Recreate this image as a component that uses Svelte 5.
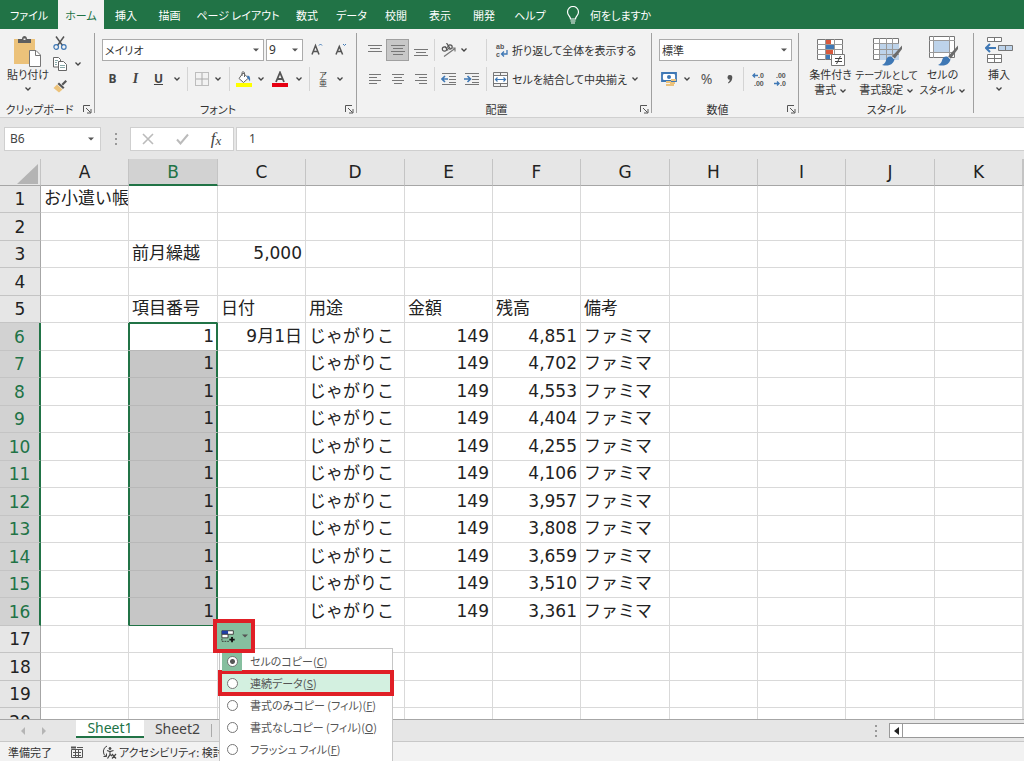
<script>
  const tabs = ['ファイル', 'ホーム', '挿入', '描画', 'ページ レイアウト', '数式', 'データ', '校閲', '表示', '開発', 'ヘルプ'];
  const cols = ['A', 'B', 'C', 'D', 'E', 'F', 'G', 'H', 'I', 'J', 'K', ''];
  const widths = [41, 88, 89, 88, 99, 88, 88, 89, 88, 88, 89, 88];
  const balances = ['4,851', '4,702', '4,553', '4,404', '4,255', '4,106', '3,957', '3,808', '3,659', '3,510', '3,361'];

  const cells = {
    A1: 'お小遣い帳',
    B3: '前月繰越',
    C3: '5,000',
    B5: '項目番号',
    C5: '日付',
    D5: '用途',
    E5: '金額',
    F5: '残高',
    G5: '備考',
    C6: '9月1日'
  };
  balances.forEach((b, i) => {
    const r = i + 6;
    cells['B' + r] = '1';
    cells['D' + r] = 'じゃがりこ';
    cells['E' + r] = '149';
    cells['F' + r] = b;
    cells['G' + r] = 'ファミマ';
  });

  const rows = Array.from({ length: 20 }, (_, i) => i + 1);
  const inSel = (r) => r >= 6 && r <= 16;
  const isNum = (v) => v !== undefined && /^\d/.test(v);

  const fills = [
    ['セルのコピー', 'C'],
    ['連続データ', 'S'],
    ['書式のみコピー (フィル)', 'F'],
    ['書式なしコピー (フィル)', 'O'],
    ['フラッシュ フィル', 'F']
  ];
  let fill = $state(0);
</script>

{#snippet chev()}
  <svg class="chev" width="8" height="6" viewBox="0 0 8 6"><path d="M1.500 1.500 4 4l2.500-2.500" fill="none" stroke="#444" stroke-width="1.300" /></svg>
{/snippet}

{#snippet caret()}
  <svg class="caret" width="6" height="4" viewBox="0 0 6 4"><path d="M0 .5h6L3 3.500z" fill="#555" /></svg>
{/snippet}

{#snippet footer(name, launcher)}
  <div class="foot">
    <span>{name}</span>
    {#if launcher}
      <button class="launch" aria-label={name}>
        <svg width="9" height="9" viewBox="0 0 9 9" fill="none" stroke="#555"><path d="M.5 7V.5H7M3 3l4.500 4.500M8 4v4H4" /></svg>
      </button>
    {/if}
  </div>
{/snippet}

{#snippet lines(list)}
  <svg width="14" height="14" viewBox="0 0 14 14" stroke="#777">
    {#each list as [x1, x2, y]}<path d="M{x1} {y}.5H{x2}" />{/each}
  </svg>
{/snippet}

{#snippet brush()}
  <path d="M30 9.500 20 20.500l2.500 2.500L30 13z" fill="#6b6b6b" />
  <path d="M19.500 20.500c-3-.6-5 1-5.500 4-.5 2-2 3.500-4 4.500 5 1.500 11 .5 12.500-5.500z" fill="#3f78b5" />
  <path d="m20 20.500 2.500 2.500" stroke="#fff" />
{/snippet}

<div class="app">
  <nav class="tabs">
    {#each tabs as t, i}
      <button class="tab" class:active={i === 1}>{t}</button>
    {/each}
    <button class="tell">
      <svg width="14" height="18" viewBox="0 0 14 18" fill="none" stroke="#fff" stroke-width="1.200"><path d="M4.500 13c0-3-3-3.500-3-7a5.500 5.500 0 0 1 11 0c0 3.500-3 4-3 7zM4.500 15h5M5 17h4" /></svg>
      何をしますか
    </button>
  </nav>

  <div class="ribbon">
    <section class="group clip">
      <div class="big-row">
        <button class="big paste">
          <svg width="28" height="31" viewBox="0 0 28 31">
            <path d="M0 3h21v25H0z" fill="#ecc27a" />
            <path d="M4 3h4c0-4 5-4 5 0h4v4H4z" fill="#5e5e5e" /><path d="M9.500 2.500h2v1.500h-2z" fill="#f2f2f2" />
            <path d="M15.500 14.500h6.500l4.500 4.500v11.500h-11z" fill="#fff" stroke="#777" /><path d="M21.500 14.500V19.500h5" fill="none" stroke="#777" />
          </svg>
          <span>貼り付け</span>
          {@render chev()}
        </button>
        <div class="small-col">
          <button aria-label="切り取り">
            <svg width="14" height="14" viewBox="0 0 14 14" fill="none"><path d="M3 0.500 9.500 9.500M11 .5 4.500 9.500" stroke="#555" stroke-width="1.500" /><circle cx="3.200" cy="11" r="2.300" stroke="#3f78b5" stroke-width="1.200" /><circle cx="10.800" cy="11" r="2.300" stroke="#3f78b5" stroke-width="1.200" /></svg>
          </button>
          <button aria-label="コピー">
            <svg width="14" height="14" viewBox="0 0 14 14" fill="#fff" stroke="#666"><path d="M.5.5h5l2 2v7.500h-7z" /><path d="M5.500 4.500h5l3 3v6h-8z" /><path d="M2 3.500h3M2 5.500h2M2 7.500h2M7 8.500h5M7 10.500h5" stroke="#8aa" /></svg>
          </button>
          <button class="cv" aria-label="コピーのオプション">{@render chev()}</button>
          <button class="painter" aria-label="書式のコピー">
            <svg width="14" height="13" viewBox="0 0 14 13"><path d="m12.500 0 1.500 1.500-4 4L8.500 4z" fill="#555" /><path d="m6 2.500 5.500 5-1.500 1.500-5.500-5z" fill="#555" /><path d="m4 4.500 5.500 5L6 12.500.5 8z" fill="#ecc27a" /></svg>
          </button>
        </div>
      </div>
      {@render footer('クリップボード', true)}
    </section>

    <section class="group font">
      <div class="row1 fontrow">
        <label class="pick name"><select aria-label="フォント名"><option>メイリオ</option></select>{@render caret()}</label>
        <label class="pick size"><select aria-label="フォント サイズ"><option>9</option></select>{@render caret()}</label>
        <button class="grow" aria-label="フォント サイズの拡大"><svg width="13" height="14" viewBox="0 0 13 14" fill="none" stroke="#555"><path d="m1 12.500 3.500-9 3.500 9M2.200 9.500h4.600" stroke-width="1.500" /><path d="m8 3.500 1.500-1.500L11 3.500" stroke="#3f78b5" /></svg></button>
        <button class="grow" aria-label="フォント サイズの縮小"><svg width="13" height="14" viewBox="0 0 13 14" fill="none" stroke="#555"><path d="m1 12.500 3.300-8 3.300 8M2.200 9.500h4.200" stroke-width="1.500" /><path d="m8 2 1.500 1.500L11 2" stroke="#3f78b5" /></svg></button>
      </div>
      <div class="row2 styles">
        <button class="b">B</button>
        <button class="i">I</button>
        <button class="u">U</button>
        <button aria-label="下線のオプション">{@render chev()}</button>
        <i class="sep"></i>
        <button aria-label="罫線"><svg width="14" height="14" viewBox="0 0 14 14" fill="none" stroke="#888"><path d="M.5.5h13v13H.5z" stroke-dasharray="1 1" /><path d="M7 1v12M1 7h12" stroke="#aaa" /></svg></button>
        <button aria-label="罫線のオプション">{@render chev()}</button>
        <i class="sep"></i>
        <button aria-label="塗りつぶしの色"><svg width="16" height="16" viewBox="0 0 16 16"><path d="m7 2 5.500 5L7.500 11.500 3 7.500z" fill="#fff" stroke="#666" /><path d="M6 5V1.500C6 .5 8.500.5 8.500 2v4" fill="none" stroke="#666" /><path d="M11.500 4.500c2.500 0 3 3 2.500 6-1-1-1.500-3-3-4z" fill="#3f78b5" /><path d="M0 12h16v4H0z" fill="#ff0" /></svg></button>
        <button aria-label="色のオプション">{@render chev()}</button>
        <button aria-label="フォントの色"><svg width="16" height="16" viewBox="0 0 16 16"><path d="M4 11 8 1.500 12 11M5.500 8h5" fill="none" stroke="#555" stroke-width="1.800" /><path d="M0 12h16v4H0z" fill="#e60012" /></svg></button>
        <button aria-label="文字色のオプション">{@render chev()}</button>
        <i class="sep"></i>
        <button class="ruby" aria-label="ふりがな"><span>ア</span><span>亜</span></button>
        <button aria-label="ふりがなのオプション">{@render chev()}</button>
      </div>
      {@render footer('フォント', true)}
    </section>

    <section class="group align">
      <div class="row1 al">
        <button aria-label="上揃え">{@render lines([[0, 14, 2], [2, 12, 5], [0, 14, 8]])}</button>
        <button class="on" aria-label="上下中央揃え">{@render lines([[0, 14, 2], [2, 12, 5], [0, 14, 8], [2, 12, 11]])}</button>
        <button aria-label="下揃え">{@render lines([[0, 14, 6], [2, 12, 9], [0, 14, 12]])}</button>
        <i class="sep"></i>
        <button aria-label="方向"><svg width="15" height="14" viewBox="0 0 15 14" fill="none" stroke="#555" stroke-width="1.200"><circle cx="3.500" cy="6" r="2.200" /><path d="m4 3.500 3 4M5.500 0l4 6" /><circle cx="9" cy="4" r="2.200" /><path d="M3 13.500 14 5.500M10.500 5H14v3.500" stroke="#777" /></svg></button>
        <button class="left" aria-label="方向のオプション">{@render chev()}</button>
        <i class="sep"></i>
        <button class="wide wrap"><svg width="13" height="17" viewBox="0 0 13 17"><text x="1" y="7" class="tiny">ab</text><text x="1" y="15" class="tiny">c</text><path d="M12 8v4H6.500M9 9.500 6.500 12 9 14.500" fill="none" stroke="#3f78b5" stroke-width="1.300" /></svg>折り返して全体を表示する</button>
      </div>
      <div class="row2 al">
        <button aria-label="左揃え">{@render lines([[1, 13, 2], [1, 9, 5], [1, 13, 8], [1, 9, 11]])}</button>
        <button aria-label="中央揃え">{@render lines([[1, 13, 2], [3, 11, 5], [1, 13, 8], [3, 11, 11]])}</button>
        <button aria-label="右揃え">{@render lines([[1, 13, 2], [5, 13, 5], [1, 13, 8], [5, 13, 11]])}</button>
        <i class="sep"></i>
        <button aria-label="インデントを減らす"><svg width="15" height="14" viewBox="0 0 15 14" fill="none" stroke="#777"><path d="M1 1.500h14M8 4.500h7M8 7.500h7M8 10.500h7M1 12.500h14" /><path d="M7 7H1M4 4 1 7l3 3" stroke="#3f78b5" stroke-width="1.600" /></svg></button>
        <button aria-label="インデントを増やす"><svg width="15" height="14" viewBox="0 0 15 14" fill="none" stroke="#777"><path d="M1 1.500h14M8 4.500h7M8 7.500h7M8 10.500h7M1 12.500h14" /><path d="M0 7h6M3.500 4l3 3-3 3" stroke="#3f78b5" stroke-width="1.600" /></svg></button>
        <i class="sep"></i>
        <button class="wide"><svg width="15" height="15" viewBox="0 0 15 15" fill="none" stroke="#777"><path d="M.5.5h14v14H.5zM.5 3.500h14M.5 11.500h14M7.500.5v3M7.500 11.500v3" /><path d="M1 4h13v7H1z" fill="#fff" stroke="none" /><path d="M2.500 7.500h10M4.500 5.500l-2 2 2 2M10.500 5.500l2 2-2 2" stroke="#3f78b5" stroke-width="1.200" /></svg>セルを結合して中央揃え</button>
        <button class="end" aria-label="結合のオプション">{@render chev()}</button>
      </div>
      {@render footer('配置', true)}
    </section>

    <section class="group number">
      <div class="row1"><label class="pick fmt"><select aria-label="表示形式"><option>標準</option></select>{@render caret()}</label></div>
      <div class="row2 nums">
        <button aria-label="通貨表示形式"><svg width="17" height="15" viewBox="0 0 17 15"><path d="M1 1h14v8H1z" fill="#fff" stroke="#3f78b5" stroke-width="1.800" /><circle cx="8" cy="5" r="2" fill="#3f78b5" /><path d="M1 3.500 3 1M15 3.500 13 1M1 6.500 3 9" stroke="#3f78b5" /><path d="M10 7h5v2h-5zM9 10h5v2H9zM5 9h5v2H5zM5 12h8v2H5z" fill="#ecc27a" /></svg></button>
        <button aria-label="通貨のオプション">{@render chev()}</button>
        <button class="pct">%</button>
        <button aria-label="桁区切り"><svg width="6" height="9" viewBox="0 0 6 9"><path d="M3 0a2.300 2.300 0 0 1 2.300 2.500C5.300 5 4 7 1.500 8.500L1 7.500C2 7 2.700 6 2.800 4.800A2.400 2.400 0 0 1 3 0z" fill="#555" /></svg></button>
        <i class="sep"></i>
        <button aria-label="小数点以下の表示桁数を増やす"><svg width="14" height="17" viewBox="0 0 14 17"><text x="6" y="7" class="tiny">.0</text><text x="2" y="15" class="tiny">.00</text><path d="M6 4.500H1M3 2.500l-2 2 2 2" fill="none" stroke="#3f78b5" stroke-width="1.400" /></svg></button>
        <button aria-label="小数点以下の表示桁数を減らす"><svg width="14" height="17" viewBox="0 0 14 17"><text x="2" y="7" class="tiny">.00</text><text x="6" y="15" class="tiny">.0</text><path d="M0 12.500h5M3 10.500l2 2-2 2" fill="none" stroke="#3f78b5" stroke-width="1.400" /></svg></button>
      </div>
      {@render footer('数値', true)}
    </section>

    <section class="group look">
      <div class="big-row look-row">
        <button class="big">
          <svg width="30" height="31" viewBox="0 0 30 31">
            <path d="M1.500 3.500h25v20h-25z" fill="#fff" stroke="#777" /><path d="M9.500 3v21M18.500 3v21M1 8.500h26M1 13.500h26M1 18.500h26" stroke="#999" />
            <path d="M10 4h5v4h-5zM10 14h7v4h-7z" fill="#d9583b" /><path d="M10 9h8v4h-8zM10 19h4v4h-4z" fill="#3f78b5" />
            <path d="M15.500 18.500h13v11h-13z" fill="#fff" stroke="#777" /><path d="M19 22.500h7M19 25.500h7M24.500 20l-4 8" stroke="#444" />
          </svg>
          <span>条件付き</span><span>書式 {@render chev()}</span>
        </button>
        <button class="big">
          <svg width="30" height="31" viewBox="0 0 30 31">
            <path d="M1.500 2.500h25v21h-25z" fill="#fff" stroke="#777" /><path d="M8 8h19v16H8z" fill="#bdd3ea" /><path d="M7.500 2v22M14.500 2v22M20.500 2v22M1 7.500h26M1 13.500h26M1 18.500h26" stroke="#999" />
            {@render brush()}
          </svg>
          <span class="long">テーブルとして</span><span>書式設定 {@render chev()}</span>
        </button>
        <button class="big">
          <svg width="30" height="31" viewBox="0 0 30 31">
            <path d="M1.500.5h25v21h-25z" fill="#fff" stroke="#777" /><path d="M5.500 0v22M21.500 0v22M1 4.500h26M1 16.500h26" stroke="#999" /><path d="M6 5h15v11H6z" fill="#bdd3ea" />
            {@render brush()}
          </svg>
          <span>セルの</span><span class="long">スタイル {@render chev()}</span>
        </button>
      </div>
      {@render footer('スタイル', false)}
    </section>

    <section class="group last">
      <div class="big-row">
        <button class="big">
          <svg width="28" height="31" viewBox="0 0 28 31" fill="#fff" stroke="#777">
            <path d="M2.500 1.500h14v4h-14zM9.500 1.500v4M2.500 18.500h14v8h-14zM9.500 18.500v8M2.500 22.500h14" />
            <path d="M13.500 9.500h14v5h-14zM20.500 9.500v5" fill="#bdd3ea" /><path d="M11 12H1M5 8l-4 4 4 4" fill="none" stroke="#3f78b5" stroke-width="2" />
          </svg>
          <span>挿入</span>
          {@render chev()}
        </button>
      </div>
    </section>
  </div>

  <div class="formula">
    <div class="namebox"><input aria-label="名前ボックス" value="B6" />{@render caret()}</div>
    <svg class="dots" width="4" height="12" viewBox="0 0 4 12" fill="#999"><path d="M1 0h2v2H1zM1 5h2v2H1zM1 10h2v2H1z" /></svg>
    <div class="fxbox">
      <button aria-label="キャンセル"><svg width="12" height="12" viewBox="0 0 12 12"><path d="m1 1 10 10M11 1 1 11" stroke="#bbb" stroke-width="1.600" /></svg></button>
      <button aria-label="入力"><svg width="13" height="12" viewBox="0 0 13 12"><path d="m1 6.500 3.500 4L12 1.500" fill="none" stroke="#bbb" stroke-width="2" /></svg></button>
      <button class="fx"><span>f</span><small>x</small></button>
    </div>
    <input class="entry" aria-label="数式バー" value="1" />
  </div>

  <main class="sheet">
    <div class="clipper">
      <table>
        <colgroup>
          {#each widths as w}<col style="width: {w}px" />{/each}
          <col />
        </colgroup>
        <thead>
          <tr>
            <th class="corner"><svg width="21" height="20" viewBox="0 0 21 20"><path d="M21 0v20H0z" fill="#b4b4b4" /></svg></th>
            {#each cols as c}<th class:hot={c === 'B'}>{c}</th>{/each}
          </tr>
        </thead>
        <tbody>
          {#each rows as r}
            <tr>
              <th class:hot={inSel(r)}>{r}</th>
              {#each cols as c}
                {@const v = cells[c + r]}
                <td
                  class:num={isNum(v)}
                  class:sel={c === 'B' && inSel(r)}
                  class:first={c === 'B' && r === 6}
                  class:final={c === 'B' && r === 16}
                  class:above={c === 'B' && r === 5}
                  class:before={c === 'A' && inSel(r)}>{v ?? ''}</td>
              {/each}
            </tr>
          {/each}
        </tbody>
      </table>
    </div>

    <div class="autofill">
      <button class="tag" aria-label="オートフィル オプション">
        <svg width="15" height="15" viewBox="0 0 17 15"><path d="M1 1h13v4H1z" fill="#fff" stroke="#333" /><path d="M1 1h7v4H1z" fill="#1f3fa8" /><path d="M1 5h7v4H1z" fill="#fff" stroke="#333" /><path d="M1 10v3h8" fill="none" stroke="#333" stroke-dasharray="2 1" /><path d="M12.500 8v6M9.500 11h6" stroke="#111" stroke-width="2" /></svg>
        {@render caret()}
      </button>
      <div class="menu">
        {#each fills as [name, key], i}
          <label class:mark={i === 1}>
            <span class="dot" class:picked={fill === i}><input type="radio" name="fill" value={i} bind:group={fill} /></span>
            <span>{name}(<u>{key}</u>)</span>
          </label>
        {/each}
      </div>
    </div>
  </main>

  <div class="sheets">
    <div class="arrows">
      <svg width="30" height="8" viewBox="0 0 30 8" fill="#b5b5b5"><path d="M5 0v8L1 4zM22 0v8l4-4z" /></svg>
    </div>
    <button class="st current">Sheet1</button>
    <button class="st">Sheet2</button>
    <i class="bar"></i>
    <div class="hscroll">
      <svg width="4" height="12" viewBox="0 0 4 12" fill="#999"><path d="M1 0h2v2H1zM1 5h2v2H1zM1 10h2v2H1z" /></svg>
      <div class="track"><button aria-label="左へスクロール"><svg width="5" height="8" viewBox="0 0 5 8"><path d="M5 0v8L0 4z" fill="#222" /></svg></button></div>
    </div>
  </div>

  <footer class="status">
    <span>準備完了</span>
    <svg width="12" height="12" viewBox="0 0 12 12" fill="none" stroke="#555"><path d="M.5 3.500h11v8H.5zM2 6.500h8M2 9.500h8M4.500 4v7M7.500 4v7" /><path d="M0 1.500h5" stroke-width="2" /><path d="M6 1.500h6" /></svg>
    <span class="acc">
      <svg width="15" height="14" viewBox="0 0 15 14" fill="none" stroke="#444"><path d="M5 1a6 6 0 0 0-1 10.500M1.500 11.500H4.500V8.500" /><circle cx="8" cy="3.500" r="1" fill="#444" /><path d="m5 5.500 3 1 3.500-1M8 6.500v3l-2.500 4M8 9.500l2 1.500M10 9l4 4.500M14 9l-4 4.500" stroke-width="1.200" /></svg>
      アクセシビリティ: 検討が
    </span>
  </footer>
</div>

<style>
  :global(body) {
    margin: 0;
  }
  .app {
    height: 100vh;
    display: flex;
    flex-direction: column;
    overflow: hidden;
    background: #e6e6e6;
    color: #333;
    font-family: "Noto Sans CJK JP", "Noto Sans", sans-serif;
    font-size: 11px;
    line-height: 16px;
    font-feature-settings: "palt";
  }
  button,
  input,
  select {
    font: inherit;
    font-feature-settings: inherit;
    color: inherit;
    background: none;
    border: 0;
    padding: 0;
    margin: 0;
    border-radius: 0;
  }
  button {
    display: flex;
    align-items: center;
    justify-content: center;
    white-space: nowrap;
  }
  svg {
    flex: none;
  }

  .tabs {
    height: 29px;
    flex: none;
    display: grid;
    grid-template-columns: 58px 46px 44px 43px 94px 44px 45px 44px 44px 44px 48px auto;
    justify-content: start;
    background: #217346;
    color: #fff;
  }
  .active {
    background: #f2f2f2;
    color: #217346;
  }
  .tell {
    gap: 10px;
    padding-left: 12px;
  }

  .ribbon {
    height: 88px;
    flex: none;
    display: flex;
    background: #f2f2f2;
    border-bottom: 1px solid #d0d0d0;
  }
  .group {
    flex: none;
    box-sizing: border-box;
    display: flex;
    flex-direction: column;
    background: linear-gradient(#a0a0a0, #a0a0a0) right 4px / 1px 80px no-repeat;
  }
  .clip {
    width: 95px;
  }
  .font {
    width: 262px;
  }
  .align {
    width: 295px;
  }
  .number {
    width: 147px;
  }
  .look {
    width: 175px;
  }
  .last {
    flex: 1 1 50px;
    min-width: 50px;
    background: none;
  }
  .foot {
    margin-top: auto;
    height: 16px;
    display: flex;
    align-items: center;
  }
  .foot span {
    flex: 1;
    text-align: center;
  }
  .launch {
    width: 16px;
    height: 16px;
  }
  .row1 {
    margin-top: 10px;
    height: 22px;
  }
  .row2 {
    margin-top: 6px;
    height: 24px;
  }
  .sep {
    width: 1px;
    align-self: stretch;
    justify-self: center;
    background: #d4d4d4;
  }
  .big-row {
    margin-top: 7px;
    display: flex;
  }
  .big {
    flex-direction: column;
    justify-content: flex-start;
    line-height: 15px;
  }
  .paste {
    width: 56px;
    margin-right: -4px;
  }
  .paste .chev,
  .last .chev {
    margin-top: 4px;
  }
  .last .big-row {
    justify-content: center;
  }
  .small-col {
    display: grid;
    grid-template-columns: 16px 20px;
    grid-template-rows: 14px 28px 16px;
  }
  .small-col button:nth-child(2) {
    grid-area: 2 / 1;
  }
  .small-col .cv {
    grid-area: 2 / 2;
  }
  .small-col .painter {
    grid-area: 3 / 1;
  }
  .look-row {
    display: grid;
    grid-template-columns: 52px 60px 52px;
    justify-content: center;
  }
  .long {
    font-size: 10px;
  }

  .fontrow {
    display: flex;
    padding-left: 7px;
    gap: 2px;
  }
  .pick {
    position: relative;
    display: flex;
    align-items: center;
    box-sizing: border-box;
    height: 22px;
    border: 1px solid #ababab;
    background: #fff;
  }
  .pick select {
    appearance: none;
    width: 100%;
    height: 20px;
    padding-left: 2px;
    outline: none;
  }
  .caret {
    flex: none;
  }
  .pick .caret {
    position: absolute;
    right: 4px;
    pointer-events: none;
  }
  .name {
    width: 162px;
  }
  .size {
    width: 37px;
    font-family: "Noto Sans", sans-serif;
    font-size: 12px;
  }
  .fmt {
    width: 133px;
    margin-left: 7px;
  }
  .grow {
    width: 20px;
    margin-left: 2px;
    align-items: flex-start;
    padding-top: 3px;
  }
  .styles {
    display: grid;
    padding-left: 6px;
    grid-template-columns: 23px 23px 23px 13px 9px 19px 14px 8px 21px 13px 26px 12px 9px 18px 16px;
  }
  .b,
  .i,
  .u {
    font-family: "Noto Sans", sans-serif;
    font-weight: 700;
    font-size: 12px;
    color: #444;
  }
  .i {
    font-family: "Liberation Serif", serif;
    font-style: italic;
    font-size: 14px;
  }
  .u {
    text-decoration: underline;
  }
  .ruby {
    flex-direction: column;
    font-size: 8px;
    line-height: 8px;
  }
  .al {
    display: grid;
    padding-left: 6px;
    grid-template-columns: 23px 23px 23px 5px 23px 23px 6px 139px 14px;
  }
  .on {
    background: #c8c8c8;
    box-shadow: inset 0 0 0 1px #a0a0a0;
  }
  .left {
    justify-content: flex-start;
  }
  .wide {
    justify-content: flex-start;
    gap: 4px;
    padding-left: 4px;
  }
  .wrap {
    padding-left: 6px;
  }
  .tiny {
    font: 700 7px "Liberation Sans", sans-serif;
    fill: #555;
  }
  .nums {
    display: grid;
    padding-left: 7px;
    grid-template-columns: 21px 13px 27px 19px 8px 23px 22px;
  }
  .pct {
    font-family: "Noto Sans", sans-serif;
    font-size: 14px;
    color: #555;
  }

  .formula {
    flex: none;
    height: 24px;
    padding: 9px 0 7px 4px;
    display: flex;
    align-items: stretch;
  }
  .namebox,
  .fxbox,
  .entry {
    box-sizing: border-box;
    border: 1px solid #cfcfcf;
    background: #fff;
    font-family: "Noto Sans", sans-serif;
    font-size: 12px;
    color: #444;
  }
  .namebox {
    width: 97px;
    display: flex;
    align-items: center;
    padding: 0 6px 0 5px;
  }
  .namebox input {
    flex: 1;
    min-width: 0;
  }
  .dots {
    margin: 0 12px 0 13px;
    align-self: center;
  }
  .fxbox {
    width: 104px;
    display: grid;
    grid-template-columns: 34px 34px 34px;
  }
  .fx {
    font-family: "Liberation Serif", serif;
    font-style: italic;
    font-size: 17px;
    color: #444;
  }
  .fx small {
    font-size: 13px;
    padding-top: 4px;
  }
  .entry {
    flex: 1;
    min-width: 0;
    margin-left: 2px;
    padding-left: 12px;
    border-right: 0;
  }

  .sheet {
    flex: 1;
    min-height: 0;
    position: relative;
    z-index: 1;
    padding-top: 1px;
    display: flex;
  }
  .clipper {
    flex: 1;
    min-width: 0;
    overflow: hidden;
    background: #fff;
  }
  table {
    width: 100%;
    table-layout: fixed;
    border-collapse: separate;
    border-spacing: 0;
    font-family: "DejaVu Sans", "Noto Sans CJK JP", sans-serif;
    font-feature-settings: normal;
    font-size: 17px;
    line-height: 24px;
    color: #222;
  }
  th,
  td {
    box-sizing: border-box;
    padding: 0 3px 2px 3px;
    font-weight: 400;
    white-space: nowrap;
    border-right: 1px solid #d9d9d9;
    border-bottom: 1px solid #d9d9d9;
    text-align: left;
    height: 27px;
    overflow: hidden;
  }
  tbody tr:nth-child(even) > * {
    height: 28px;
  }
  th {
    background: #e6e6e6;
    text-align: center;
    padding: 0;
    border-color: #c4c4c4;
  }
  thead th {
    border-bottom-color: #a6a6a6;
  }
  tbody th {
    border-right-color: #a6a6a6;
  }
  .corner {
    text-align: right;
    line-height: 0;
    padding: 4px 2px 0 0;
  }
  .corner svg {
    display: inline-block;
  }
  th.hot {
    background: #d2d2d2;
    color: #217346;
  }
  thead th.hot {
    border-bottom: 2px solid #217346;
  }
  tbody th.hot {
    border-right: 2px solid #217346;
  }
  td.num {
    text-align: right;
  }
  td.sel {
    background: #c6c6c6;
    border-right-color: #217346;
    box-shadow: inset 1px 0 #217346, inset -1px 0 #217346;
    border-bottom-color: #b8b8b8;
  }
  td.first {
    background: #fff;
    box-shadow: inset 1px 0 #217346, inset -1px 0 #217346, inset 0 1px #217346;
  }
  td.above,
  td.final {
    border-bottom-color: #217346;
  }
  td.before {
    border-right-color: #217346;
  }

  .autofill {
    position: absolute;
    z-index: 0;
    left: 213px;
    top: 461px;
  }
  .tag {
    width: 42px;
    height: 34px;
    box-sizing: border-box;
    border: 4px solid #e01f26;
    background: #86bf9f;
    gap: 6px;
  }
  .menu {
    position: absolute;
    left: 6px;
    top: 29px;
    width: 172px;
    z-index: -1;
    background: #fff;
    border: 1px solid #c6c6c6;
    padding: 1px 0 3px;
    color: #555;
  }
  .menu label {
    display: flex;
    align-items: center;
    height: 22px;
    padding-left: 2px;
    gap: 8px;
    white-space: nowrap;
  }
  .menu .mark {
    background: #d3f0e0;
    box-shadow: 0 0 0 2px #e01f26, inset 0 0 0 2px #e01f26;
  }
  .dot {
    width: 20px;
    height: 20px;
    display: flex;
    align-items: center;
    justify-content: center;
  }
  .picked {
    background: #86bf9f;
  }
  .dot input {
    appearance: none;
    box-sizing: border-box;
    width: 11px;
    height: 11px;
    border: 1px solid #777;
    border-radius: 50%;
    background: #fff;
  }
  .dot input:checked {
    background: radial-gradient(#555 0 2px, #fff 3px);
  }

  .sheets {
    flex: none;
    box-sizing: border-box;
    height: 22px;
    display: flex;
    border-top: 1px solid #a6a6a6;
    font-family: "Noto Sans", sans-serif;
    font-size: 14px;
    color: #444;
  }
  .arrows {
    width: 76px;
    box-sizing: border-box;
    padding: 7px 0 0 20px;
    line-height: 0;
  }
  .st {
    width: 67px;
    height: 18px;
    box-sizing: border-box;
  }
  .current {
    width: 68px;
    background: #fff;
    color: #217346;
    border-bottom: 2px solid #217346;
  }
  .bar {
    width: 1px;
    height: 13px;
    margin-top: 4px;
    background: #aaa;
  }
  .hscroll {
    margin-left: auto;
    width: 150px;
    display: flex;
    align-items: center;
    gap: 11px;
  }
  .track {
    flex: 1;
    height: 13px;
    border: 1px solid #999;
    border-right: 0;
    background: #fff;
  }
  .track button {
    width: 13px;
    height: 13px;
    border-right: 1px solid #999;
  }

  .status {
    flex: none;
    box-sizing: border-box;
    height: 20px;
    display: flex;
    align-items: center;
    padding-left: 8px;
    gap: 19px;
    background: #f2f2f2;
    border-top: 1px solid #c8c8c8;
    white-space: nowrap;
  }
  .acc {
    display: flex;
    align-items: center;
    gap: 2px;
  }
</style>
